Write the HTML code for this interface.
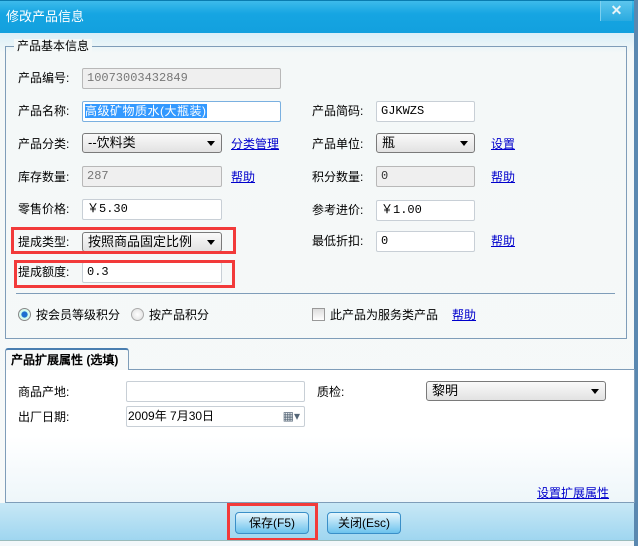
<!DOCTYPE html>
<html><head><meta charset="utf-8"><style>
*{margin:0;padding:0;box-sizing:border-box}
body{width:638px;height:546px;overflow:hidden;position:relative;background:#fff;font:12px/14px "Liberation Sans","WenQuanYi Zen Hei",sans-serif;color:#000}
.a{position:absolute}
.title{left:0;top:0;width:634px;height:33px;background:linear-gradient(#3dbbeb,#16a5e2 40%,#12a0de);border-top:1px solid #0a7cb0}
.title span{position:absolute;left:6px;top:8px;color:#fff;font-size:13px;line-height:16px}
.close{left:600px;top:1px;width:32px;height:20px;background:linear-gradient(#5cc6ee,#2aaae0);color:#e8f4f8;font-weight:bold;font-size:14px;text-align:center;line-height:18px;border-left:1px solid #7cd0f0}
.main{left:0;top:33px;width:634px;height:470px;background:linear-gradient(#d8eef8,#f4f8f8 20px,#f6f9f9)}
.edge{left:634px;top:0;width:4px;height:546px;background:#5a88b0}
.grp{left:5px;top:46px;width:622px;height:293px;border:1px solid #7f9db9}
.leg{left:14px;top:39px;background:#f4f8f8;padding:0 3px;font-size:12px}
.in{background:#fff;border:1px solid #c8cfd6;border-radius:2px;height:21px;padding:2px 4px;font-family:"Liberation Mono","WenQuanYi Zen Hei",monospace;font-size:12px}
.dis{background:#efefef;color:#777;border-color:#b8b8b8}
.sel{border:1px solid #7a7a7a;border-radius:3px;height:20px;background:linear-gradient(#fafafa,#e2e2e2);padding:2px 5px;font-size:13px;line-height:14px}
.sel:after{content:"";position:absolute;right:6px;top:7px;border:4px solid transparent;border-top:5px solid #000;border-bottom:0}
.lnk{color:#00c;text-decoration:underline}
.red{border:3px solid #f23a3a}
.sep{left:16px;top:293px;width:599px;height:1px;background:#7f9db9}
.tab{left:5px;top:348px;width:124px;height:22px;border:1px solid #7f9db9;border-bottom:none;border-top:2px solid #4a7eb0;background:#f7f9f9;font-weight:bold;padding:3px 5px;border-radius:3px 3px 0 0;z-index:2}
.panel{left:5px;top:369px;width:630px;height:134px;border:1px solid #7f9db9;background:linear-gradient(#fff 50%,#eef6fa)}
.bar{left:0;top:503px;width:634px;height:37px;background:linear-gradient(#c8e8f6,#9fd6f0)}
.btn{height:22px;width:74px;border:1px solid #3a8fc8;border-radius:4px;background:linear-gradient(#e6f6fd,#a9dcf5 50%,#6cc3ee);text-align:center;line-height:20px;font-size:12px}
</style></head><body>
<div class="a main"></div>
<div class="a title"><span>修改产品信息</span></div>
<div class="a close">✕</div>
<div class="a edge"></div>
<div class="a grp"></div>
<div class="a leg">产品基本信息</div>

<div class="a" style="left:18px;top:71px">产品编号:</div>
<div class="a in dis" style="left:82px;top:68px;width:199px">10073003432849</div>

<div class="a" style="left:18px;top:104px">产品名称:</div>
<div class="a in" style="left:82px;top:101px;width:199px;border-color:#7ab0e0;padding-left:2px"><span style="background:#3399ff;color:#fff;font-family:'WenQuanYi Zen Hei',sans-serif;letter-spacing:0.5px">高级矿物质水(大瓶装)</span></div>
<div class="a" style="left:312px;top:104px">产品简码:</div>
<div class="a in" style="left:376px;top:101px;width:99px">GJKWZS</div>

<div class="a" style="left:18px;top:137px">产品分类:</div>
<div class="a sel" style="left:82px;top:133px;width:140px">--饮料类</div>
<div class="a lnk" style="left:231px;top:137px">分类管理</div>
<div class="a" style="left:312px;top:137px">产品单位:</div>
<div class="a sel" style="left:376px;top:133px;width:99px">瓶</div>
<div class="a lnk" style="left:491px;top:137px">设置</div>

<div class="a" style="left:18px;top:170px">库存数量:</div>
<div class="a in dis" style="left:82px;top:166px;width:140px">287</div>
<div class="a lnk" style="left:231px;top:170px">帮助</div>
<div class="a" style="left:312px;top:170px">积分数量:</div>
<div class="a in dis" style="left:376px;top:166px;width:99px;color:#333">0</div>
<div class="a lnk" style="left:491px;top:170px">帮助</div>

<div class="a" style="left:18px;top:202px">零售价格:</div>
<div class="a in" style="left:82px;top:199px;width:140px">￥5.30</div>
<div class="a" style="left:312px;top:203px">参考进价:</div>
<div class="a in" style="left:376px;top:200px;width:99px">￥1.00</div>

<div class="a" style="left:18px;top:235px">提成类型:</div>
<div class="a sel" style="left:82px;top:232px;width:140px">按照商品固定比例</div>
<div class="a" style="left:312px;top:234px">最低折扣:</div>
<div class="a in" style="left:376px;top:231px;width:99px">0</div>
<div class="a lnk" style="left:491px;top:234px">帮助</div>

<div class="a" style="left:18px;top:265px">提成额度:</div>
<div class="a in" style="left:82px;top:262px;width:140px">0.3</div>

<div class="a red" style="left:11px;top:227px;width:225px;height:27px"></div>
<div class="a red" style="left:14px;top:260px;width:221px;height:28px"></div>

<div class="a sep"></div>
<div class="a" style="left:18px;top:308px;width:13px;height:13px;border-radius:50%;border:1px solid #888;background:radial-gradient(#1c6fd0 35%,#cfe 45%,#eee)"></div>
<div class="a" style="left:36px;top:308px">按会员等级积分</div>
<div class="a" style="left:131px;top:308px;width:13px;height:13px;border-radius:50%;border:1px solid #aaa;background:radial-gradient(#fff,#ddd)"></div>
<div class="a" style="left:149px;top:308px">按产品积分</div>
<div class="a" style="left:312px;top:308px;width:13px;height:13px;border:1px solid #999;background:linear-gradient(#ddd,#fff)"></div>
<div class="a" style="left:330px;top:308px">此产品为服务类产品</div>
<div class="a lnk" style="left:452px;top:308px">帮助</div>

<div class="a panel"></div>
<div class="a tab">产品扩展属性 (选填)</div>
<div class="a" style="left:18px;top:385px">商品产地:</div>
<div class="a in" style="left:126px;top:381px;width:179px"></div>
<div class="a" style="left:317px;top:385px">质检:</div>
<div class="a sel" style="left:426px;top:381px;width:180px">黎明</div>
<div class="a" style="left:18px;top:410px">出厂日期:</div>
<div class="a in" style="left:126px;top:406px;width:179px;padding-left:1px;font-family:'Liberation Sans','WenQuanYi Zen Hei',sans-serif">2009年 7月30日<span style="position:absolute;right:4px;top:2px;color:#567">▦▾</span></div>
<div class="a lnk" style="left:537px;top:486px">设置扩展属性</div>

<div class="a bar"></div>
<div class="a btn" style="left:235px;top:512px">保存(F5)</div>
<div class="a btn" style="left:327px;top:512px">关闭(Esc)</div>
<div class="a red" style="left:227px;top:503px;width:91px;height:38px"></div>
<div class="a" style="left:0;top:540px;width:634px;height:6px;background:#f4f8fb;border-top:1px solid #9bb"></div>
</body></html>
